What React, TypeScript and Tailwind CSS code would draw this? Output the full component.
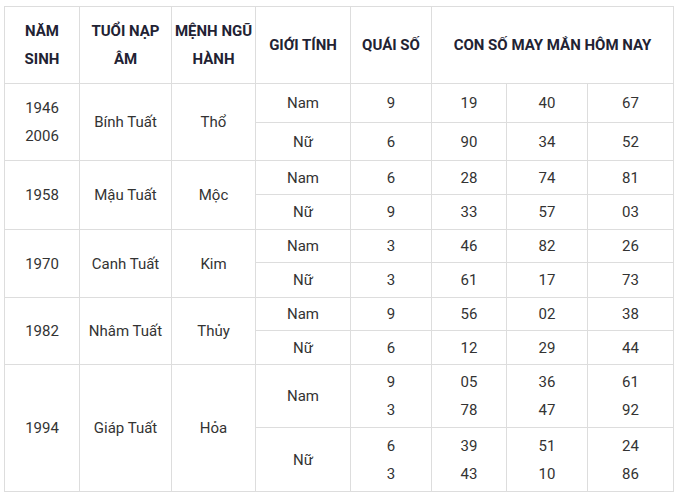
import React from 'react';

type Row = {
  year: string[];
  tuoi: string;
  menh: string;
  nam: string[][];
  nu: string[][];
  h: [string, string];
};

const rows: Row[] = [
  {
    year: ['1946', '2006'],
    tuoi: 'Bính Tuất',
    menh: 'Thổ',
    nam: [['9'], ['19'], ['40'], ['67']],
    nu: [['6'], ['90'], ['34'], ['52']],
    h: ['h-[39px]', 'h-[38px]'],
  },
  {
    year: ['1958'],
    tuoi: 'Mậu Tuất',
    menh: 'Mộc',
    nam: [['6'], ['28'], ['74'], ['81']],
    nu: [['9'], ['33'], ['57'], ['03']],
    h: ['h-[34px]', 'h-[35px]'],
  },
  {
    year: ['1970'],
    tuoi: 'Canh Tuất',
    menh: 'Kim',
    nam: [['3'], ['46'], ['82'], ['26']],
    nu: [['3'], ['61'], ['17'], ['73']],
    h: ['h-[33px]', 'h-[35px]'],
  },
  {
    year: ['1982'],
    tuoi: 'Nhâm Tuất',
    menh: 'Thủy',
    nam: [['9'], ['56'], ['02'], ['38']],
    nu: [['6'], ['12'], ['29'], ['44']],
    h: ['h-[33px]', 'h-[34px]'],
  },
  {
    year: ['1994'],
    tuoi: 'Giáp Tuất',
    menh: 'Hỏa',
    nam: [['9', '3'], ['05', '78'], ['36', '47'], ['61', '92']],
    nu: [['6', '3'], ['39', '43'], ['51', '10'], ['24', '86']],
    h: ['h-[63px]', 'h-[64px]'],
  },
];

const cell = 'border border-[#dddddd] text-center align-middle p-0';

const Lines = ({ items }: { items: string[] }) => (
  <>
    {items.map((t, i) => (
      <div key={i}>{t}</div>
    ))}
  </>
);

export default function App() {
  return (
    <div className="w-[675px] h-[494px] bg-white pt-[6px] pl-[4px] font-['Roboto',sans-serif] text-[15px] leading-[28px] text-[#333333]">
      <table className="table-fixed border-collapse w-[669px]">
        <colgroup>
          <col className="w-[75px]" />
          <col className="w-[92px]" />
          <col className="w-[84px]" />
          <col className="w-[95px]" />
          <col className="w-[81px]" />
          <col className="w-[75px]" />
          <col className="w-[81px]" />
          <col className="w-[86px]" />
        </colgroup>
        <thead>
          <tr className="h-[77px] font-bold text-[#222233]">
            <th className={cell}>NĂM<br />SINH</th>
            <th className={cell}>TUỔI NẠP<br />ÂM</th>
            <th className={cell}>MỆNH NGŨ<br />HÀNH</th>
            <th className={cell}>GIỚI TÍNH</th>
            <th className={cell}>QUÁI SỐ</th>
            <th className={cell} colSpan={3}>CON SỐ MAY MẮN HÔM NAY</th>
          </tr>
        </thead>
        <tbody>
          {rows.map((r) => (
            <React.Fragment key={r.tuoi}>
              <tr className={r.h[0]}>
                <td className={cell} rowSpan={2}><Lines items={r.year} /></td>
                <td className={cell} rowSpan={2}>{r.tuoi}</td>
                <td className={cell} rowSpan={2}>{r.menh}</td>
                <td className={cell}>Nam</td>
                {r.nam.map((v, i) => (
                  <td key={i} className={cell}><Lines items={v} /></td>
                ))}
              </tr>
              <tr className={r.h[1]}>
                <td className={cell}>Nữ</td>
                {r.nu.map((v, i) => (
                  <td key={i} className={cell}><Lines items={v} /></td>
                ))}
              </tr>
            </React.Fragment>
          ))}
        </tbody>
      </table>
    </div>
  );
}
